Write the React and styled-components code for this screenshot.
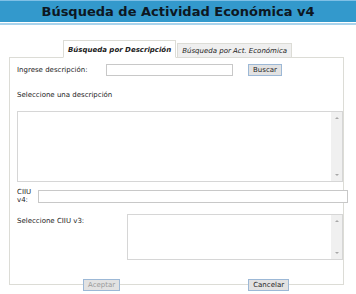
import React from "react";
import styled, { createGlobalStyle } from "styled-components";

const GlobalStyle = createGlobalStyle`
  html, body {
    margin: 0;
    padding: 0;
    background: #ffffff;
  }
  body {
    font-family: "DejaVu Sans", Verdana, sans-serif;
    font-size: 7px;
    color: #222;
  }
`;

const Page = styled.div`
  width: 356px;
  height: 294px;
  overflow: hidden;
  background: #fff;
`;

const Header = styled.div`
  padding-bottom: 1px;
  border-bottom: 2px solid #a9d3ec;
`;

const TitleBar = styled.h1`
  margin: 0;
  height: 21px;
  border-top: 1px solid #7fc0e6;
  background: #3399cc;
  color: #0d1722;
  font-family: "DejaVu Sans", Verdana, sans-serif;
  font-weight: bold;
  font-size: 13px;
  line-height: 21px;
  text-align: center;
`;

const TabRow = styled.div`
  display: flex;
  justify-content: center;
  align-items: flex-end;
  margin-top: 15px;
  position: relative;
  z-index: 1;
`;

const Tab = styled.div`
  height: ${(p) => (p.$active ? "18px" : "15px")};
  padding: 0 4px;
  margin-right: 1px;
  border: 1px solid #dcdcd6;
  border-bottom: ${(p) => (p.$active ? "1px solid #fff" : "1px solid #dcdcd6")};
  background: ${(p) => (p.$active ? "#fff" : "#efefef")};
  font-style: italic;
  font-weight: ${(p) => (p.$active ? "bold" : "normal")};
  font-size: 7px;
  color: #222;
  display: flex;
  align-items: center;
  padding-top: ${(p) => (p.$active ? "2px" : "0")};
  box-sizing: border-box;
`;

const Panel = styled.div`
  margin: -1px 12px 0 9px;
  border: 1px solid #dcdcd6;
  padding: 6px 0 0 7px;
  height: 228px;
  box-sizing: border-box;
  display: flex;
  flex-direction: column;
`;

const Row = styled.div`
  display: flex;
  align-items: ${(p) => p.$align || "center"};
  margin-top: ${(p) => p.$mt || 0}px;
`;

const Label = styled.span`
  width: ${(p) => p.$w || "auto"};
  margin-top: ${(p) => p.$mt || 0}px;
  flex: none;
  line-height: 8px;
`;

const TextInput = styled.input`
  box-sizing: border-box;
  width: ${(p) => p.$w};
  height: ${(p) => p.$h || "12px"};
  margin: 0 ${(p) => p.$mr || 0}px 0 0;
  border: 1px solid #c8c8c8;
  background: #fff;
  padding: 0;
  outline: none;
  flex: none;
`;

const Button = styled.button`
  box-sizing: border-box;
  height: 12px;
  padding: 0 4px;
  border: 1px solid #9cb8d6;
  background: #e2e2e2;
  font-family: "DejaVu Sans", Verdana, sans-serif;
  font-size: 7px;
  color: ${(p) => (p.disabled ? "#9a9a9a" : "#222")};
  line-height: 10px;
  cursor: pointer;
`;

const ListBox = styled.div`
  box-sizing: border-box;
  width: ${(p) => p.$w};
  height: ${(p) => p.$h};
  border: 1px solid #d6d6d6;
  background: #fff;
  display: flex;
  justify-content: flex-end;
`;

const ScrollTrack = styled.div`
  width: 11px;
  background: #f0f0f0;
  display: flex;
  flex-direction: column;
  justify-content: space-between;
  align-items: center;
  padding: 5px 0;
  box-sizing: border-box;
`;

const Arrow = styled.div`
  width: 0;
  height: 0;
  border-left: 2px solid transparent;
  border-right: 2px solid transparent;
  ${(p) =>
    p.$down
      ? "border-top: 2px solid #a8a8a8;"
      : "border-bottom: 2px solid #a8a8a8;"}
`;

const Footer = styled.div`
  margin-top: auto;
  margin-bottom: -7px;
  display: flex;
  gap: 128px;
  padding-left: 66px;
`;

const Scroll = () => (
  <ScrollTrack>
    <Arrow />
    <Arrow $down />
  </ScrollTrack>
);

export default function App() {
  return (
    <Page>
      <GlobalStyle />
      <Header>
        <TitleBar>Búsqueda de Actividad Económica v4</TitleBar>
      </Header>
      <TabRow>
        <Tab $active>Búsqueda por Descripción</Tab>
        <Tab>Búsqueda por Act. Económica</Tab>
      </TabRow>
      <Panel>
        <Row>
          <Label $w="89px">Ingrese descripción:</Label>
          <TextInput $w="127px" $mr={15} />
          <Button>Buscar</Button>
        </Row>
        <Row $mt={15}>
          <Label>Seleccione una descripción</Label>
        </Row>
        <Row $mt={12}>
          <ListBox $w="326px" $h="71px">
            <Scroll />
          </ListBox>
        </Row>
        <Row $mt={6}>
          <Label $w="21px">
            CIIU
            <br />
            v4:
          </Label>
          <TextInput $w="310px" $h="13px" />
        </Row>
        <Row $mt={10} $align="flex-start">
          <Label $w="110px" $mt={3}>
            Seleccione CIIU v3:
          </Label>
          <ListBox $w="216px" $h="46px">
            <Scroll />
          </ListBox>
        </Row>
        <Footer>
          <Button disabled>Aceptar</Button>
          <Button>Cancelar</Button>
        </Footer>
      </Panel>
    </Page>
  );
}
